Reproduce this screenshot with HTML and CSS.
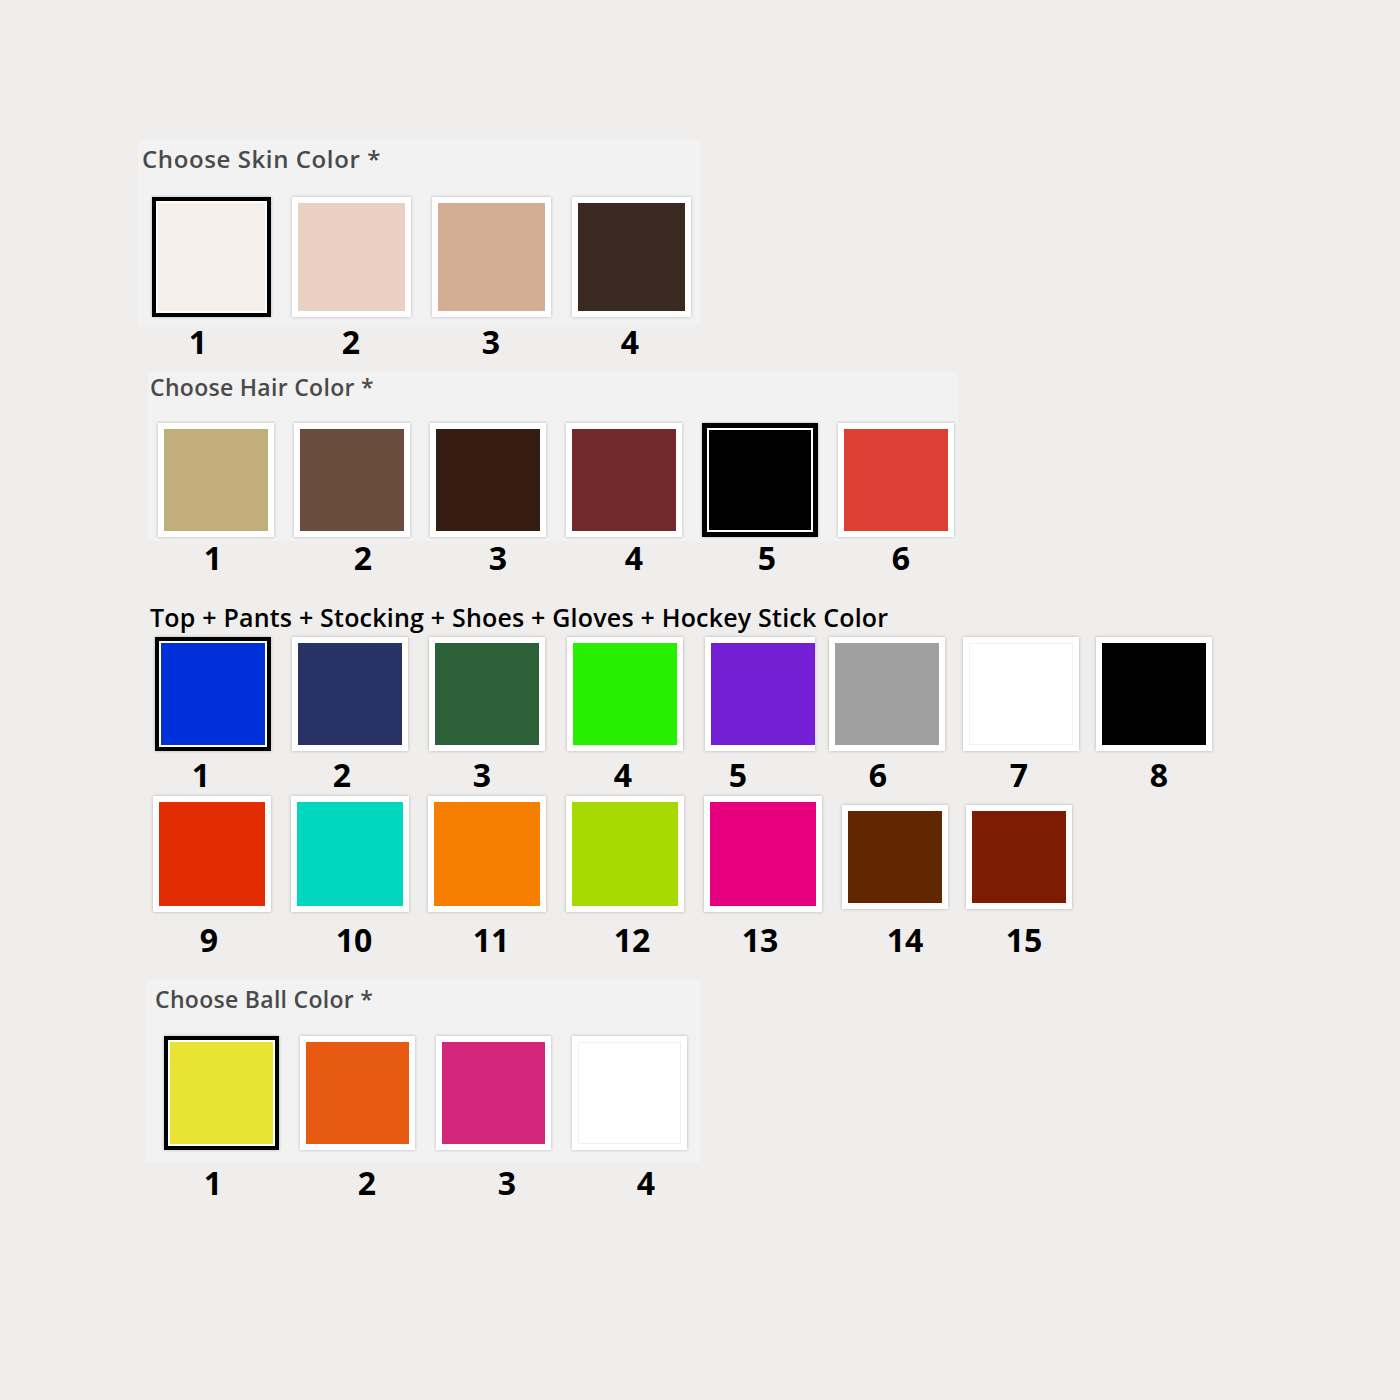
FILE: index.html
```html
<!DOCTYPE html>
<html lang="en">
<head>
  <meta charset="UTF-8">
  <title>Choose Colors</title>
  <link rel="stylesheet" href="styles.css">
</head>
<body>

  <div class="section skin">
    <div class="panel">
      <div class="label">Choose Skin Color *</div>
      <div class="swatches">
        <div class="swatch selected" style="background:#f6eee9"></div>
        <div class="swatch" style="background:#e9d0c2"></div>
        <div class="swatch" style="background:#d4ae94"></div>
        <div class="swatch" style="background:#3a2a21"></div>
      </div>
    </div>
    <div class="nums"><span>1</span><span>2</span><span>3</span><span>4</span></div>
  </div>

  <div class="section hair">
    <div class="panel">
      <div class="label">Choose Hair Color *</div>
      <div class="swatches">
        <div class="swatch" style="background:#c1ae7a"></div>
        <div class="swatch" style="background:#6b4b3c"></div>
        <div class="swatch" style="background:#361c13"></div>
        <div class="swatch" style="background:#712a29"></div>
        <div class="swatch selected" style="background:#000"></div>
        <div class="swatch" style="background:#dc4133"></div>
      </div>
    </div>
    <div class="nums"><span>1</span><span>2</span><span>3</span><span>4</span><span>5</span><span>6</span></div>
  </div>

  <div class="section outfit">
    <div class="title">Top + Pants + Stocking + Shoes + Gloves + Hockey Stick Color</div>
    <div class="swatches row1">
      <div class="swatch selected" style="background:#0030d8"></div>
      <div class="swatch" style="background:#283264"></div>
      <div class="swatch" style="background:#2e6137"></div>
      <div class="swatch" style="background:#26f000"></div>
      <div class="swatch cut" style="background:#7320d4"></div>
      <div class="swatch" style="background:#a0a0a0"></div>
      <div class="swatch light" style="background:#ffffff"></div>
      <div class="swatch" style="background:#000000"></div>
    </div>
    <div class="nums row1"><span>1</span><span>2</span><span>3</span><span>4</span><span>5</span><span>6</span><span>7</span><span>8</span></div>
    <div class="swatches row2">
      <div class="swatch" style="background:#e02c00"></div>
      <div class="swatch" style="background:#00d7be"></div>
      <div class="swatch" style="background:#f57d00"></div>
      <div class="swatch" style="background:#a6d900"></div>
      <div class="swatch" style="background:#e6007f"></div>
      <div class="swatch small" style="background:#612800"></div>
      <div class="swatch small" style="background:#7e1b03"></div>
    </div>
    <div class="nums row2"><span>9</span><span>10</span><span>11</span><span>12</span><span>13</span><span>14</span><span>15</span></div>
  </div>

  <div class="section ball">
    <div class="panel">
      <div class="label">Choose Ball Color *</div>
      <div class="swatches">
        <div class="swatch selected" style="background:#e9e433"></div>
        <div class="swatch" style="background:#e65a11"></div>
        <div class="swatch" style="background:#d1267a"></div>
        <div class="swatch light" style="background:#ffffff"></div>
      </div>
    </div>
    <div class="nums"><span>1</span><span>2</span><span>3</span><span>4</span></div>
  </div>

</body>
</html>
```

FILE: styles.css
```css
body {
  margin: 0;
  padding-top: 140px;
  background: #efeeec;
  font-family: "Open Sans", sans-serif;
}
.panel {
  background: #f2f2f2;
}
.label {
  font-family: "Open Sans", sans-serif;
  font-weight: 600;
  font-size: 24px;
  letter-spacing: 0.6px;
  line-height: 26px;
  color: #4a4a4a;
}
.swatches {
  display: flex;
}
.swatch {
  box-sizing: border-box;
  width: 116px;
  height: 114px;
  border: 6px solid #fff;
  box-shadow: 0 0 3px rgba(0,0,0,0.25);
}
.swatch.selected {
  border: 4px solid #000;
  box-shadow: inset 0 0 0 2px #fff, 0 0 3px rgba(0,0,0,0.25);
}
.swatch.light {
  box-shadow: inset 0 0 0 1px #f1f1f1, 0 0 3px rgba(0,0,0,0.25);
}
.nums {
  display: grid;
  justify-items: start;
  height: 34px;
  line-height: 34px;
  font-size: 32px;
  font-weight: 700;
  color: #000;
}
.nums span {
  width: 40px;
  text-align: center;
}

/* skin */
.skin .panel {
  margin-left: 138px;
  width: 562px;
  padding: 6px 0 8px 4px;
  box-sizing: border-box;
}
.skin .swatches {
  gap: 21px;
  margin: 25px 0 0 10px;
}
.skin .swatch {
  width: 119px;
  height: 120px;
}
.skin .nums {
  padding-left: 178px;
  grid-template-columns: 153px 140px 139px 40px;
}

/* hair */
.hair {
  margin-top: 13px;
}
.hair .panel {
  margin-left: 148px;
  width: 810px;
  padding: 2px 0 4px 2px;
  box-sizing: border-box;
}
.hair .label,
.ball .label {
  font-size: 23px;
  letter-spacing: 0.3px;
}
.hair .swatches {
  gap: 20px;
  margin: 23px 0 0 8px;
}
.hair .swatch.selected {
  border-width: 5px;
}
.hair .nums {
  padding-left: 193px;
  grid-template-columns: 150px 135px 136px 133px 134px 40px;
}

/* top + pants ... */
.outfit {
  margin-top: 27px;
}
.title {
  margin-left: 150px;
  font-size: 25px;
  font-weight: 600;
  letter-spacing: 0.2px;
  line-height: 30px;
  color: #000;
}
.outfit .swatches {
  display: grid;
  align-items: start;
}
.outfit .swatches.row1 {
  margin-top: 5px;
  padding-left: 155px;
  grid-template-columns: 137px 137px 138px 138px 124px 134px 133px 116px;
}
.outfit .swatch.cut {
  width: 110px;
  border-right: 0;
}
.outfit .nums.row1 {
  margin-top: 7px;
  padding-left: 181px;
  grid-template-columns: 141px 140px 141px 115px 140px 141px 140px 40px;
}
.outfit .swatches.row2 {
  margin-top: 4px;
  padding-left: 153px;
  grid-template-columns: 138px 137px 138px 138px 138px 124px 110px;
}
.outfit .row2 .swatch {
  width: 118px;
  height: 116px;
}
.outfit .row2 .swatch.small {
  width: 106px;
  height: 104px;
  margin-top: 9px;
}
.outfit .nums.row2 {
  margin-top: 11px;
  padding-left: 189px;
  grid-template-columns: 145px 137px 141px 128px 145px 119px 40px;
}

/* ball */
.ball {
  margin-top: 23px;
}
.ball .panel {
  margin-left: 146px;
  width: 554px;
  padding: 6px 0 12px 9px;
  box-sizing: border-box;
}
.ball .swatches {
  gap: 21px;
  margin: 24px 0 0 9px;
}
.ball .swatch {
  width: 115px;
}
.ball .nums {
  margin-top: 4px;
  padding-left: 193px;
  grid-template-columns: 154px 140px 139px 40px;
}
```
